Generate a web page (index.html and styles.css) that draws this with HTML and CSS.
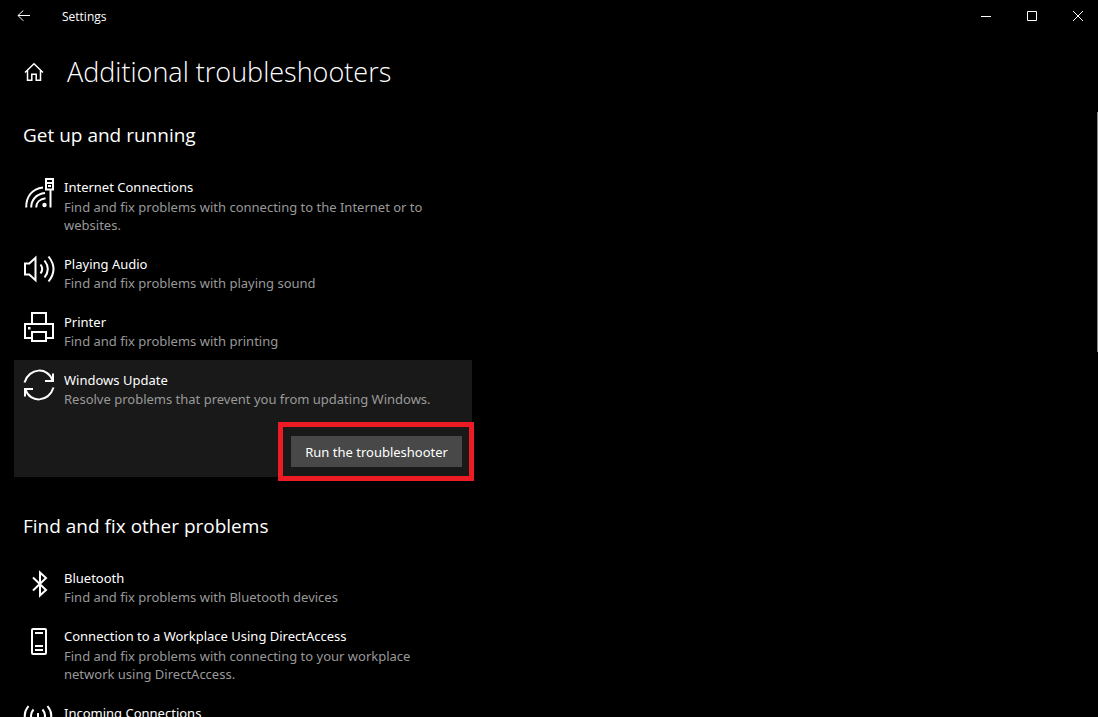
FILE: index.html
```html
<!DOCTYPE html>
<html lang="en">
<head>
<meta charset="utf-8">
<meta name="viewport" content="width=device-width, initial-scale=1">
<title>Settings</title>
<link rel="stylesheet" href="styles.css">
</head>
<body class="window">
<header class="titlebar">
  <button class="back" type="button" aria-label="Back"><svg width="14" height="12" viewBox="0 0 14 12"><path d="M13 5.500H1M6.300.500 1 5.500l5.300 5.300"/></svg></button>
  <span class="app-name">Settings</span>
  <div class="window-controls">
    <button class="control" type="button" aria-label="Minimize"><svg width="10" height="10" viewBox="0 0 10 10"><path d="M0 5.500h10"/></svg></button>
    <button class="control" type="button" aria-label="Maximize"><svg width="10" height="10" viewBox="0 0 10 10"><path d="M.5.5h9v9h-9z"/></svg></button>
    <button class="control" type="button" aria-label="Close"><svg width="10" height="10" viewBox="0 0 10 10"><path d="M0 0l10 10M10 0L0 10"/></svg></button>
  </div>
</header>
<main class="content">
  <div class="page-head">
    <button class="home" type="button" aria-label="Home"><svg width="20" height="20" viewBox="0 0 20 20"><path d="M1 10.500 10 1.800l9 8.700M3.500 8.500v9.700h4.300v-6h4.400v6h4.300V8.500"/></svg></button>
    <h1 class="page-title">Additional troubleshooters</h1>
  </div>

  <section class="group">
    <h2 class="group-title">Get up and running</h2>
    <ul class="list">
      <li class="item item-long">
        <svg class="icon" viewBox="0 -2 32 32"><path d="M3.200 29.500C3.200 18.500 9 11 20 9.500M8.200 29.500c0-7.800 5-13.500 13.800-14.500M13.200 29.500c0-4.700 3.300-8.500 9.300-9.200M27.500 12v17.500"/><path d="M23 1h7v10.500h-7zM22 5h9M25 8h3" /><circle class="solid" cx="21.500" cy="27" r="2.200"/></svg>
        <div class="text"><h3 class="name">Internet Connections</h3><p class="about">Find and fix problems with connecting to the Internet or to websites.</p></div>
      </li>
      <li class="item">
        <svg class="icon" viewBox="0 0 32 32"><path d="M2 10.500h4.300l6.200-5.800v22.600l-6.200-5.800H2zM17.500 11.500q3.400 4.500 0 9M21.500 7.500q6.600 8.500 0 17M25.500 3.500q10 12.500 0 25"/></svg>
        <div class="text"><h3 class="name">Playing Audio</h3><p class="about">Find and fix problems with playing sound</p></div>
      </li>
      <li class="item">
        <svg class="icon" viewBox="0 0 32 32"><path d="M9 13V2h14v11M9 27H2V13h28v14h-7M9 21h14v9H9z"/><path class="solid" d="M5 16h2.500v2.500H5z"/></svg>
        <div class="text"><h3 class="name">Printer</h3><p class="about">Find and fix problems with printing</p></div>
      </li>
      <li class="item item-open">
        <svg class="icon" viewBox="0 0 32 32"><path d="M1.500 13.500C6-1.500 25-2.500 29.500 11.500M30.500 18.500C26 33.500 7 34.500 2.500 20.500M30 4.500V12h-8M2 27.500V20h8"/></svg>
        <div class="text"><h3 class="name">Windows Update</h3><p class="about">Resolve problems that prevent you from updating Windows.</p></div>
        <div class="action"><button class="run" type="button">Run the troubleshooter</button></div>
      </li>
    </ul>
  </section>

  <section class="group">
    <h2 class="group-title">Find and fix other problems</h2>
    <ul class="list">
      <li class="item">
        <svg class="icon" viewBox="0 -1 32 32"><path d="M10 9.500 23 22l-6 5.500v-23L23 10 10 22.500"/></svg>
        <div class="text"><h3 class="name">Bluetooth</h3><p class="about">Find and fix problems with Bluetooth devices</p></div>
      </li>
      <li class="item item-long">
        <svg class="icon" viewBox="0 -1 32 32"><rect x="9" y="3" width="14" height="25" rx="1"/><path d="M12 7h8M12 20h8M12 24h8"/></svg>
        <div class="text"><h3 class="name">Connection to a Workplace Using DirectAccess</h3><p class="about">Find and fix problems with connecting to your workplace network using DirectAccess.</p></div>
      </li>
      <li class="item">
        <svg class="icon" viewBox="0 -1 32 32"><path d="M5.500 3q-7.500 9.500 0 19M10.500 6.500q-5 6 0 12M19.500 6.500q5 6 0 12M24.500 3q7.500 9.500 0 19M15 10v20"/></svg>
        <div class="text"><h3 class="name">Incoming Connections</h3></div>
      </li>
    </ul>
  </section>
</main>
<div class="scroll-thumb"></div>
</body>
</html>
```
FILE: styles.css
```css
* { box-sizing: border-box; }
.window {
  margin: 0;
  height: 100vh;
  overflow: hidden;
  position: relative;
  background: #000;
  color: #fff;
  font-family: "Noto Sans", "Open Sans", sans-serif;
  font-size: 13px;
  line-height: 18px;
}
button { border: 0; padding: 0; background: none; color: inherit; font: inherit; }
svg { display: block; fill: none; stroke: #fff; }
.titlebar { display: flex; align-items: center; height: 32px; }
.back { display: grid; place-items: center; width: 48px; height: 32px; }
.app-name { margin-left: 14px; padding-top: 2px; font-family: "Open Sans", sans-serif; font-size: 12px; }
.window-controls { display: flex; gap: 6px; margin-left: auto; }
.control { display: grid; place-items: center; width: 40px; height: 32px; }
.content { padding: 20px 14px 0; }
.page-head { display: flex; align-items: center; gap: 23px; padding-left: 10px; }
.home svg { stroke-width: 1.5; }
.page-title { margin: 0; font-family: "Open Sans", sans-serif; font-size: 27px; font-weight: 300; line-height: 40px; }
.group { margin-top: 29px; }
.group + .group { margin-top: 35px; }
.group-title { margin: 0 0 18px; padding-left: 9px; font-family: "Open Sans", sans-serif; font-size: 19px; font-weight: 400; line-height: 28px; }
.list { margin: 0; padding: 0; list-style: none; max-width: 458px; }
.item {
  display: grid;
  grid-template-columns: 32px 1fr;
  column-gap: 9px;
  padding: 11px 10px 10px 9px;
}
.item-open { background: #191919; }
.icon { width: 32px; height: 32px; margin-top: -2px; stroke-width: 2; overflow: visible; }
.icon .solid { fill: #fff; stroke: none; }
.name { margin: 0; font-size: 13px; font-weight: 400; }
.about { margin: 1px 0 0; max-width: 384px; color: #999; }
.item-long .about { margin-top: 2px; }
.action { grid-column: 1 / -1; justify-self: end; position: relative; margin-top: 28px; }
.action::after {
  content: "";
  position: absolute;
  inset: -14px -12px -14px -13px;
  border: 5px solid #ed1c24;
  pointer-events: none;
}
.run { display: block; padding: 7px 14px 6px; background: #484848; }
.scroll-thumb { position: absolute; top: 112px; right: 0; width: 1px; height: 240px; background: #8a8a8a; }
```
